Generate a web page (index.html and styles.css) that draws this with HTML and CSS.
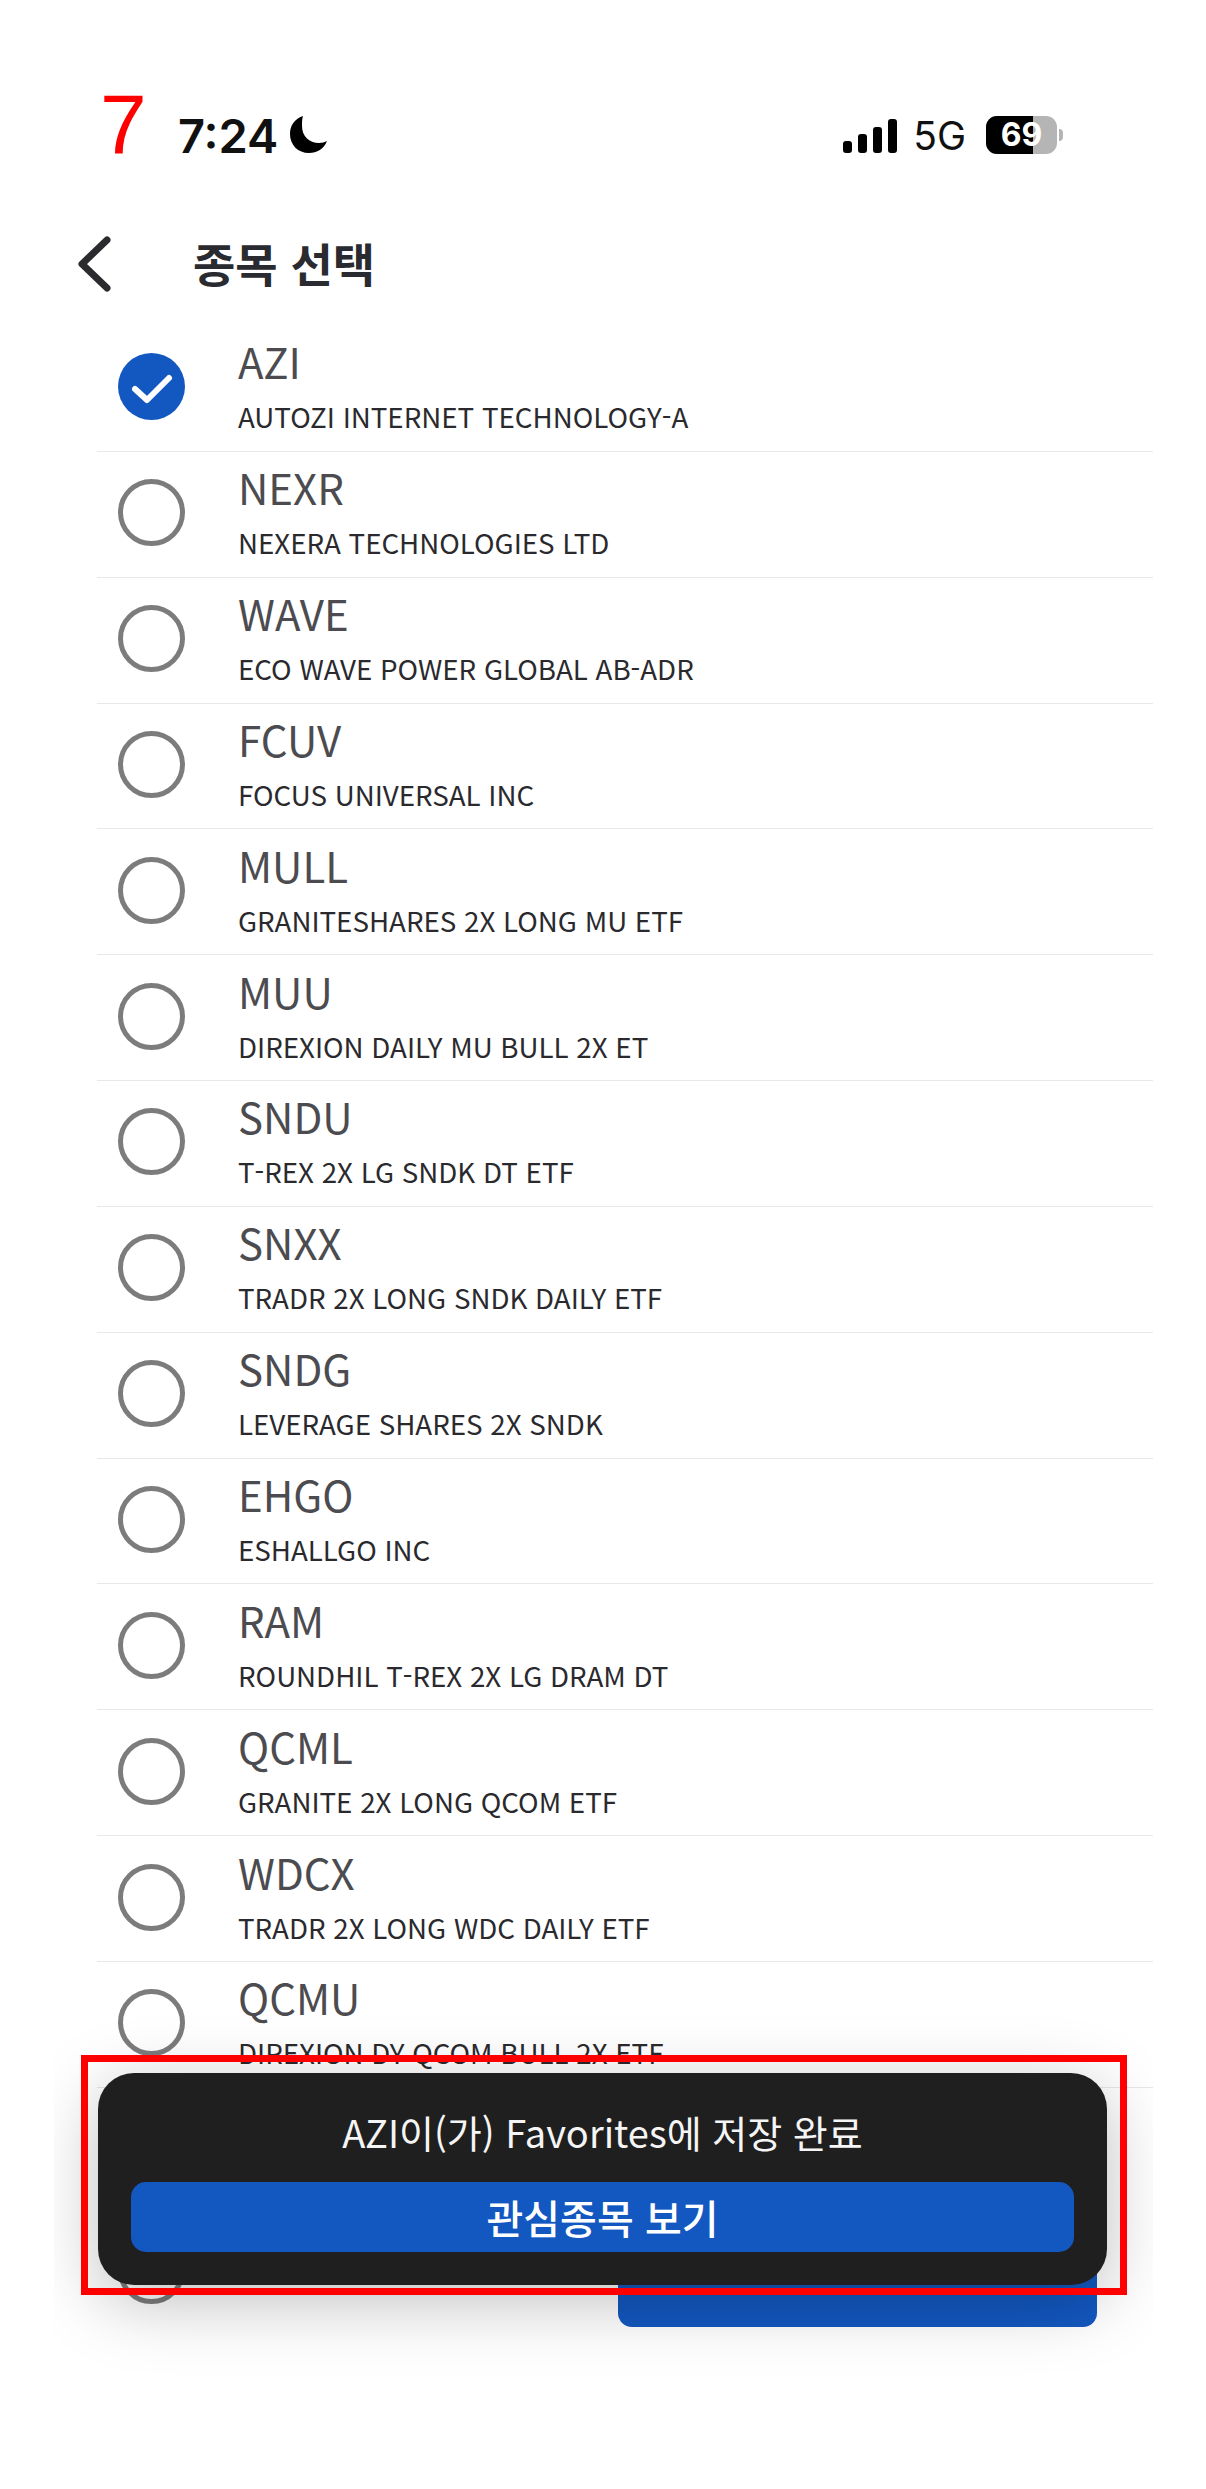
FILE: index.html
```html
<!doctype html>
<html lang="ko">
<head>
  <meta charset="UTF-8">
  <title>종목 선택</title>
  <link rel="stylesheet" href="styles.css">
</head>
<body>
  <div class="page">
    <div class="status">
      <div class="step">7</div>
      <div class="time">7:24</div>
      <svg class="moon" viewBox="0 0 38 38"><path d="M13 0C4 3 0 10 0 18c0 11 8 19 19 19 8 0 15-4 18-12-2 1-5 2-8 2C19 27 12 20 12 10c0-4 0-7 1-10z"/></svg>
      <div class="status-right">
        <div class="bars"><i class="b1"></i><i class="b2"></i><i class="b3"></i><i class="b4"></i></div>
        <div class="net">5G</div>
        <div class="battery"><div class="battery-fill"></div><span>69</span></div>
        <div class="battery-tip"></div>
      </div>
    </div>
    <div class="header">
      <svg class="back" viewBox="0 0 36 56"><path d="M31 4 6 28l25 24" /></svg>
      <div class="title">종목 선택</div>
    </div>
    <div class="list">
      <div class="row">
        <svg class="check" viewBox="0 0 67 67"><circle cx="33.500" cy="33.500" r="33.500" fill="#1358c1"/><path d="M17 36l12 11 22-22" fill="none" stroke="#fff" stroke-width="6" stroke-linecap="round" stroke-linejoin="round"/></svg>
        <div class="info"><div class="sym">AZI</div><div class="name">AUTOZI INTERNET TECHNOLOGY-A</div></div>
      </div>
      <div class="row"><div class="radio"></div><div class="info"><div class="sym">NEXR</div><div class="name">NEXERA TECHNOLOGIES LTD</div></div></div>
      <div class="row"><div class="radio"></div><div class="info"><div class="sym">WAVE</div><div class="name">ECO WAVE POWER GLOBAL AB-ADR</div></div></div>
      <div class="row"><div class="radio"></div><div class="info"><div class="sym">FCUV</div><div class="name">FOCUS UNIVERSAL INC</div></div></div>
      <div class="row"><div class="radio"></div><div class="info"><div class="sym">MULL</div><div class="name">GRANITESHARES 2X LONG MU ETF</div></div></div>
      <div class="row"><div class="radio"></div><div class="info"><div class="sym">MUU</div><div class="name">DIREXION DAILY MU BULL 2X ET</div></div></div>
      <div class="row"><div class="radio"></div><div class="info"><div class="sym">SNDU</div><div class="name">T-REX 2X LG SNDK DT ETF</div></div></div>
      <div class="row"><div class="radio"></div><div class="info"><div class="sym">SNXX</div><div class="name">TRADR 2X LONG SNDK DAILY ETF</div></div></div>
      <div class="row"><div class="radio"></div><div class="info"><div class="sym">SNDG</div><div class="name">LEVERAGE SHARES 2X SNDK</div></div></div>
      <div class="row"><div class="radio"></div><div class="info"><div class="sym">EHGO</div><div class="name">ESHALLGO INC</div></div></div>
      <div class="row"><div class="radio"></div><div class="info"><div class="sym">RAM</div><div class="name">ROUNDHIL T-REX 2X LG DRAM DT</div></div></div>
      <div class="row"><div class="radio"></div><div class="info"><div class="sym">QCML</div><div class="name">GRANITE 2X LONG QCOM ETF</div></div></div>
      <div class="row"><div class="radio"></div><div class="info"><div class="sym">WDCX</div><div class="name">TRADR 2X LONG WDC DAILY ETF</div></div></div>
      <div class="row"><div class="radio"></div><div class="info"><div class="sym">QCMU</div><div class="name">DIREXION DY QCOM BULL 2X ETF</div></div></div>
    </div>
    <div class="under-btn"></div>
    <div class="under-radio"></div>
    <div class="toast-clip">
      <div class="toast">
        <div class="toast-text">AZI이(가) Favorites에 저장 완료</div>
        <div class="toast-btn">관심종목 보기</div>
      </div>
    </div>
    <div class="mark"></div>
  </div>
</body>
</html>
```

FILE: styles.css
```css
* {
  box-sizing: border-box;
}
html, body {
  margin: 0;
  background: #fff;
}
.page {
  position: relative;
  width: 1206px;
  height: 2489px;
  padding-top: 88px;
  overflow: hidden;
  font-family: "Noto Sans CJK KR", "Noto Sans", sans-serif;
}
.status {
  display: flex;
  align-items: center;
  height: 94px;
  padding-left: 100px;
  padding-right: 143px;
}
.step {
  font-family: "Liberation Sans", sans-serif;
  font-size: 84px;
  line-height: 84px;
  color: #f00;
  width: 78px;
  margin-bottom: 23px;
}
.time {
  font-family: Inter, sans-serif;
  font-size: 47px;
  font-weight: 600;
  color: #111;
}
.moon {
  width: 38px;
  height: 38px;
  margin-left: 12px;
}
.status-right {
  display: flex;
  align-items: center;
  margin-left: auto;
}
.bars {
  display: flex;
  align-items: flex-end;
  gap: 6px;
  height: 35px;
}
.bars i {
  display: block;
  width: 9px;
  background: #000;
  border-radius: 3px;
}
.b1 { height: 12px; }
.b2 { height: 19px; }
.b3 { height: 26px; }
.b4 { height: 34px; }
.net {
  font-family: Inter, sans-serif;
  font-size: 39px;
  color: #111;
  margin-left: 16px;
}
.battery {
  position: relative;
  width: 71px;
  height: 38px;
  margin-left: 20px;
  border-radius: 11px;
  background: #b5b5b5;
  overflow: hidden;
  text-align: center;
  font-family: Inter, sans-serif;
  font-size: 32px;
  font-weight: 700;
  line-height: 38px;
  color: #fff;
}
.battery-fill {
  position: absolute;
  left: 0;
  top: 0;
  bottom: 0;
  width: 47px;
  background: #000;
}
.battery span {
  position: relative;
}
.battery-tip {
  width: 4px;
  height: 12px;
  margin-left: 2px;
  background: #b5b5b5;
  border-radius: 0 4px 4px 0;
}
.header {
  display: flex;
  align-items: center;
  height: 86px;
  margin-top: 39px;
  padding-left: 76px;
}
.back {
  width: 36px;
  height: 56px;
  fill: none;
  stroke: #2b2b2f;
  stroke-width: 7;
  stroke-linecap: round;
  stroke-linejoin: round;
}
.title {
  margin-left: 81px;
  margin-bottom: 5px;
  font-size: 46px;
  font-weight: 700;
  color: #2a2b30;
}
.list {
  margin: 19px 53px 0 97px;
}
.row {
  display: flex;
  align-items: center;
  height: 125.850px;
  border-bottom: 1px solid #e8e8e8;
  padding-left: 21px;
}
.check, .radio {
  width: 67px;
  height: 67px;
  flex: none;
  margin-top: -3px;
}
.radio {
  border: 5px solid #7c7c7c;
  border-radius: 50%;
}
.info {
  margin-left: 53px;
  margin-top: -8px;
}
.sym {
  font-size: 42px;
  line-height: 54px;
  color: #4c4c50;
}
.name {
  font-size: 27.700px;
  line-height: 36px;
  color: #2a2a2e;
  margin-top: 10px;
}
/* the bottom sheet hides behind the toast, only its edges show */
.under-btn {
  position: absolute;
  left: 618px;
  top: 2240px;
  width: 479px;
  height: 87px;
  background: #1358c1;
  border-radius: 0 0 14px 14px;
}
.under-radio {
  position: absolute;
  left: 118px;
  top: 2237px;
  width: 67px;
  height: 67px;
  border: 5px solid #7c7c7c;
  border-radius: 50%;
}
/* shadow of the toast is cut off at the sides of the list */
.toast-clip {
  position: absolute;
  left: 54px;
  top: 1960px;
  width: 1099px;
  height: 460px;
  padding: 113px 46px 0 44px;
  overflow: hidden;
}
.toast {
  height: 212px;
  padding: 0 33px;
  background: #1f1f1f;
  border-radius: 36px;
  box-shadow: 0 16px 70px rgba(0, 0, 0, 0.26);
  text-align: center;
}
.toast-text {
  font-size: 38px;
  line-height: 54px;
  color: #f5f5f5;
  padding-top: 32px;
}
.toast-btn {
  height: 70px;
  margin-top: 23px;
  border-radius: 15px;
  background: #1358c1;
  color: #fff;
  font-size: 40px;
  font-weight: 500;
  line-height: 70px;
}
.mark {
  position: absolute;
  left: 81px;
  top: 2055px;
  width: 1046px;
  height: 240px;
  border: 7px solid #f00;
}
```
